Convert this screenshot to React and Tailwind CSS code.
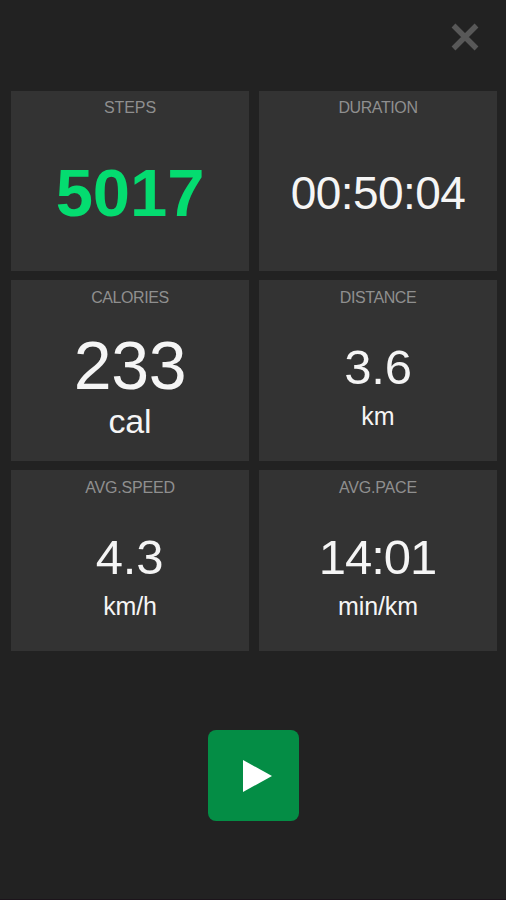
const metrics = [
  { label: 'STEPS', value: '5017', labelClass: 'pt-2 tracking-[-0.1px]', valueClass: 'mt-[12px] h-[126px] text-[67px] font-bold tracking-[-0.1px] text-[#04dc70]' },
  { label: 'DURATION', value: '00:50:04', labelClass: 'pt-2 tracking-[-0.4px]', valueClass: 'mt-[13px] h-[126px] text-[46px] tracking-[-0.6px]' },
  { label: 'CALORIES', value: '233', unit: 'cal', labelClass: 'pt-[9px] tracking-[-0.4px]', valueClass: 'mt-[22px] h-[72px] text-[68px] tracking-[-0.4px]', unitClass: 'mt-[3px] text-[34px] tracking-[-0.2px]' },
  { label: 'DISTANCE', value: '3.6', unit: 'km', labelClass: 'pt-[9px] tracking-[-0.4px]', valueClass: 'mt-[24px] h-[72px] text-[49px] tracking-[-0.2px]', unitClass: '-mt-[4px] text-[25px]' },
  { label: 'AVG.SPEED', value: '4.3', unit: 'km/h', labelClass: 'pt-[9px] tracking-[-0.2px]', valueClass: 'mt-[24px] h-[72px] pr-[1px] text-[49px] tracking-[-0.2px]', unitClass: '-mt-[4px] text-[25px] tracking-[-0.2px]' },
  { label: 'AVG.PACE', value: '14:01', unit: 'min/km', labelClass: 'pt-[9px] tracking-[-0.2px]', valueClass: 'mt-[24px] h-[72px] pr-[1px] text-[49px] tracking-[-1px]', unitClass: '-mt-[4px] text-[25px] tracking-[-0.1px]' },
];

function Metric({ label, value, unit, labelClass, valueClass, unitClass }) {
  return (
    <section className="flex flex-col items-center bg-[#333333] text-[#f5f5f5]">
      <h2 className={`shrink-0 text-[16px] leading-[18px] text-[#8f8f8f] ${labelClass}`}>{label}</h2>
      <div className={`flex shrink-0 items-center leading-none ${valueClass}`}>{value}</div>
      {unit && <div className={`flex h-[34px] shrink-0 items-center leading-none ${unitClass}`}>{unit}</div>}
    </section>
  );
}

export default function App() {
  return (
    <main className="flex h-[900px] w-[506px] flex-col border-b border-[#1c141b] bg-[#222222] font-['Liberation_Sans',Arial,sans-serif]">
      <header className="flex h-[91px] shrink-0 justify-end pt-[23px] pr-[27px]">
        <button aria-label="Close" className="size-7">
          <svg viewBox="0 0 28 28" className="size-7" fill="none" stroke="#585858" strokeWidth="5.4">
            <path d="M2.5 2.5 25.5 25.5M25.5 2.5 2.5 25.5" />
          </svg>
        </button>
      </header>
      <div className="ml-[11px] grid w-[486px] shrink-0 grid-cols-[238px_238px] grid-rows-[180px_181px_181px] gap-x-[10px] gap-y-[9px]">
        {metrics.map((metric) => <Metric key={metric.label} {...metric} />)}
      </div>
      <button aria-label="Play" className="mt-[79px] ml-[208px] flex size-[91px] shrink-0 items-center justify-center rounded-[8px] bg-[#048d45]">
        <svg viewBox="0 0 29 32" className="ml-[8px] h-8 w-[29px]" fill="#ffffff"><path d="M0 0 29 16 0 32Z" /></svg>
      </button>
    </main>
  );
}
